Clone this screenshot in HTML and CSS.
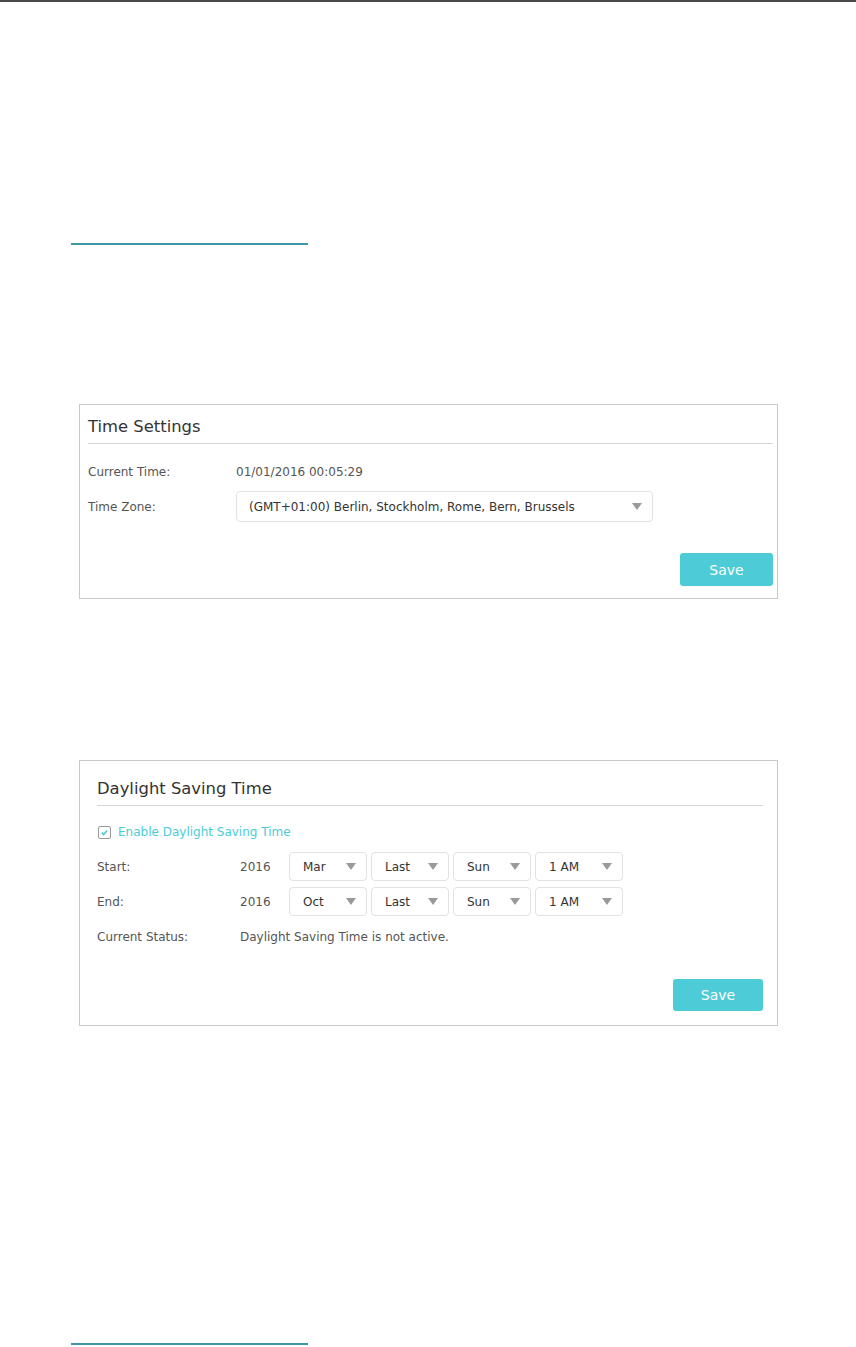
FILE: index.html
```html
<!DOCTYPE html>
<html lang="en">
<head>
  <meta charset="UTF-8" />
  <title>Time Settings</title>
  <link rel="stylesheet" href="styles.css">
</head>
<body>
  <div class="page">
    <div class="top-rule"></div>

    <div class="link-rule first"></div>

    <!-- Time Settings -->
    <div class="panel panel-time">
      <h3 class="panel-title">Time Settings</h3>
      <div class="row row-current">
        <span class="label">Current Time:</span>
        <span class="value">01/01/2016 00:05:29</span>
      </div>
      <div class="row row-zone">
        <span class="label">Time Zone:</span>
        <div class="select wide">
          <span>(GMT+01:00) Berlin, Stockholm, Rome, Bern, Brussels</span>
          <i class="arrow"></i>
        </div>
      </div>
      <div class="actions">
        <button class="save">Save</button>
      </div>
    </div>

    <!-- Daylight Saving Time -->
    <div class="panel panel-dst">
      <h3 class="panel-title">Daylight Saving Time</h3>
      <label class="check">
        <span class="box">
          <svg viewBox="0 0 10 10"><path d="M2 5.2l2 2 4-4.4" /></svg>
        </span>
        Enable Daylight Saving Time
      </label>
      <div class="row row-start">
        <span class="label">Start:</span>
        <span class="year">2016</span>
        <div class="selects">
          <div class="select s-month"><span>Mar</span><i class="arrow"></i></div>
          <div class="select s-week"><span>Last</span><i class="arrow"></i></div>
          <div class="select s-day"><span>Sun</span><i class="arrow"></i></div>
          <div class="select s-hour"><span>1 AM</span><i class="arrow"></i></div>
        </div>
      </div>
      <div class="row row-end">
        <span class="label">End:</span>
        <span class="year">2016</span>
        <div class="selects">
          <div class="select s-month"><span>Oct</span><i class="arrow"></i></div>
          <div class="select s-week"><span>Last</span><i class="arrow"></i></div>
          <div class="select s-day"><span>Sun</span><i class="arrow"></i></div>
          <div class="select s-hour"><span>1 AM</span><i class="arrow"></i></div>
        </div>
      </div>
      <div class="row row-status">
        <span class="label">Current Status:</span>
        <span class="value">Daylight Saving Time is not active.</span>
      </div>
      <div class="actions">
        <button class="save">Save</button>
      </div>
    </div>

    <div class="link-rule last"></div>
  </div>
</body>
</html>
```

FILE: styles.css
```css
body {
  margin: 0;
  background: #ffffff;
  font-family: "DejaVu Sans", Verdana, sans-serif;
  color: #555555;
}

.page {
  height: 1347px;
  overflow: hidden;
}

.top-rule {
  height: 2px;
  background: #4a4a4a;
}

.link-rule {
  width: 237px;
  height: 2px;
  margin-left: 71px;
  background: #3b98a8;
}

.link-rule.first {
  margin-top: 241px;
}

.link-rule.last {
  margin-top: 317px;
}

.panel {
  margin-left: 79px;
  border: 1px solid #c8c8c8;
}

.panel-time {
  margin-top: 159px;
  padding: 0 4px 12px 8px;
  width: 685px;
}

.panel-dst {
  margin-top: 161px;
  padding: 0 14px 14px 17px;
  width: 666px;
}

.panel-title {
  margin: 0;
  font-weight: normal;
  font-size: 16.4px;
  color: #333333;
  border-bottom: 1px solid #d5d5d5;
}

.panel-time .panel-title {
  padding: 12px 0 7px;
}

.panel-dst .panel-title {
  padding: 18px 0 7px;
}

.row {
  display: flex;
  align-items: center;
  font-size: 12px;
}

.label {
  width: 148px;
  flex: none;
}

.panel-dst .label {
  width: 143px;
}

.value {
  color: #555555;
}

.row-current {
  margin-top: 18px;
  height: 20px;
}

.row-zone {
  margin-top: 9px;
}

.select {
  height: 29px;
  border: 1px solid #e2e2e2;
  border-radius: 4px;
  box-sizing: border-box;
  display: flex;
  align-items: center;
  justify-content: space-between;
  padding: 0 10px 0 13px;
  color: #333333;
  font-size: 12px;
}

.select.wide {
  width: 417px;
  height: 31px;
  padding-left: 12px;
}

.arrow {
  width: 0;
  height: 0;
  border-left: 5px solid transparent;
  border-right: 5px solid transparent;
  border-top: 7px solid #9a9a9a;
}

.actions {
  display: flex;
  justify-content: flex-end;
  margin-top: 31px;
}

.panel-dst .actions {
  margin-top: 35px;
}

.save {
  width: 93px;
  height: 33px;
  border: none;
  border-radius: 3px;
  background: #4dcbd7;
  color: #ffffff;
  font-family: "DejaVu Sans", Verdana, sans-serif;
  font-size: 14px;
  cursor: pointer;
}

.panel-dst .save {
  width: 90px;
  height: 32px;
}

/* daylight saving */
.check {
  display: flex;
  align-items: center;
  gap: 7px;
  margin-top: 19px;
  margin-left: 1px;
  color: #4dcbd7;
  font-size: 12px;
}

.check .box {
  width: 11px;
  height: 11px;
  border: 1px solid #9a9a9a;
  border-radius: 2px;
  display: flex;
  align-items: center;
  justify-content: center;
}

.check svg {
  width: 9px;
  height: 9px;
  fill: none;
  stroke: #4dcbd7;
  stroke-width: 1.8;
}

.row-start {
  margin-top: 13px;
}

.row-end {
  margin-top: 6px;
}

.row-status {
  margin-top: 14px;
}

.year {
  width: 49px;
  flex: none;
}

.selects {
  display: flex;
  gap: 4px;
}

.s-month,
.s-week,
.s-day {
  width: 78px;
}

.s-hour {
  width: 88px;
}
```
